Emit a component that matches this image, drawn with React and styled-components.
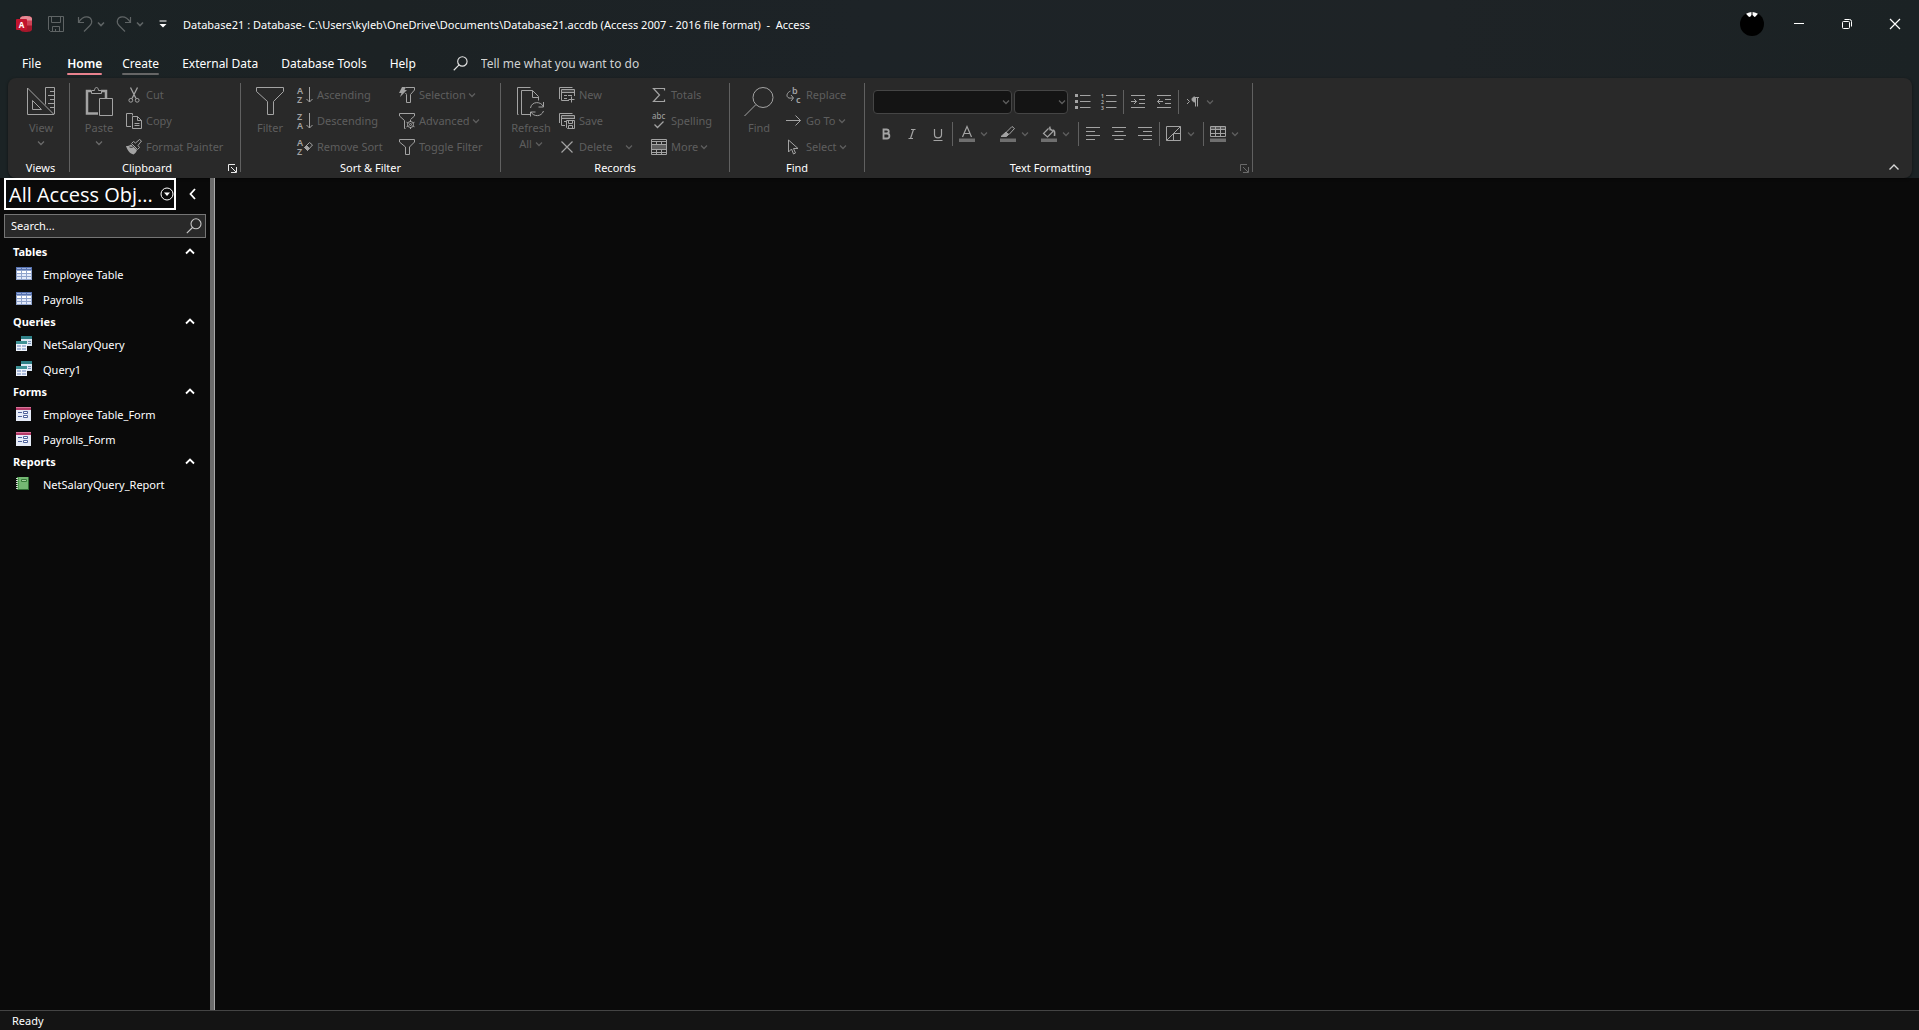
import React from 'react';
import styled, { createGlobalStyle } from 'styled-components';

const GlobalStyle = createGlobalStyle`
  *, *::before, *::after { box-sizing: border-box; }
  html, body, #root { height: 100%; }
  body {
    margin: 0;
    background: #0a0a0a;
    color: #fff;
    font-family: 'Noto Sans', 'Open Sans', sans-serif;
    font-size: 11px;
    overflow: hidden;
  }
  button, input, select { font: inherit; color: inherit; }
  button { background: none; border: 0; padding: 0; cursor: default; }
  ul { list-style: none; margin: 0; padding: 0; }
  svg { display: block; flex: none; overflow: visible; }
`;

const Window = styled.div`
  display: flex;
  flex-direction: column;
  height: 100vh;
`;

const Top = styled.header`
  background: linear-gradient(90deg, #1b2325 0%, #1c2224 20%, #1d2327 45%, #1e2326 75%, #1b2224 100%);
`;

const TitleBar = styled.div`
  display: flex;
  align-items: center;
  height: 48px;
  padding-left: 16px;
`;

const QuickAccess = styled.div`
  display: flex;
  align-items: center;
  color: #5f6465;
`;

const QuickButton = styled.button`
  display: flex;
  align-items: center;
  justify-content: center;
  width: ${props => props.$width || 16}px;
  height: 24px;
  margin-left: ${props => props.$gap || 0}px;
  color: ${props => (props.$bright ? '#fff' : 'inherit')};
`;

const Title = styled.h1`
  flex: 1;
  margin: 0 0 0 16px;
  padding-top: 1px;
  font-size: 11px;
  font-weight: 400;
  line-height: 16px;
  white-space: pre;
`;

const Avatar = styled.button`
  width: 24px;
  height: 24px;
  margin-right: 11px;
`;

const WindowButton = styled.button`
  display: flex;
  align-items: center;
  justify-content: center;
  width: 48px;
  height: 32px;
`;

const TabRow = styled.nav`
  display: flex;
  align-items: center;
  height: 30px;
  padding-left: 22px;
  font-size: 12px;
`;

const Tab = styled.button`
  position: relative;
  height: 30px;
  margin-right: ${props => props.$gap || 23}px;
  font-weight: ${props => (props.$active ? 600 : 400)};
  white-space: nowrap;

  &::after {
    content: '';
    position: absolute;
    left: 0;
    right: 0;
    bottom: 3px;
    height: 2px;
    border-radius: 1px;
    background: ${props => props.$line || 'transparent'};
  }
`;

const TellMe = styled.label`
  display: flex;
  align-items: center;
  gap: 13px;
  margin-left: 14px;
  color: #e4e4e4;

  input {
    width: 220px;
    padding: 0;
    border: 0;
    outline: 0;
    background: none;
  }
  input::placeholder { color: #d0d2d3; opacity: 1; }
`;

const Ribbon = styled.section`
  display: flex;
  height: 100px;
  margin: 0 7px 0 8px;
  padding: 4px 0 0 4px;
  border-radius: 8px;
  background: #292929;
  color: #5e5e5e;
  box-shadow: 0 1px 3px rgba(0, 0, 0, 0.5);
`;

const Group = styled.div`
  display: flex;
  flex-direction: column;
  width: ${props => props.$width}px;
`;

const GroupBody = styled.div`
  display: flex;
  gap: 6px;
  height: 78px;
  padding-left: 8px;
`;

const GroupFooter = styled.div`
  display: flex;
  align-items: center;
  height: 16px;
`;

const GroupLabel = styled.span`
  flex: 1;
  color: #fff;
  line-height: 16px;
  text-align: center;
`;

const Launcher = styled.button`
  width: 16px;
  padding-left: 4px;
  color: ${props => (props.$dim ? '#6a6a6a' : '#e8e8e8')};
`;

const GroupDivider = styled.div`
  width: 1px;
  height: 89px;
  margin-top: 1px;
  background: #606060;
`;

const LargeButton = styled.button`
  display: flex;
  flex-direction: column;
  align-items: center;
  width: ${props => props.$width || 42}px;
  padding-top: 5px;
  line-height: 16px;

  > svg { color: #a3a3a3; margin-bottom: 5px; }
  > svg:last-child { margin: 4px 0 0; color: #6a6a6a; }
`;

const InlineLabel = styled.span`
  display: flex;
  align-items: center;
  gap: 3px;
`;

const Column = styled.div`
  display: flex;
  flex-direction: column;
  width: ${props => props.$width}px;
`;

const SmallButton = styled.button`
  display: flex;
  align-items: center;
  height: 26px;
  padding-right: ${props => (props.$split ? 12 : 0)}px;
  line-height: 16px;
  white-space: nowrap;

  > svg:first-child { color: #a3a3a3; margin-right: 4px; }
  > span + svg { margin-left: ${props => (props.$split ? 'auto' : '2px')}; }
`;

const Collapse = styled.button`
  align-self: flex-end;
  margin: 0 13px 8px auto;
  color: #d8d8d8;
`;

const FormatRows = styled.div`
  display: flex;
  flex-direction: column;
  gap: 8px;
  height: 78px;
  padding: 8px 0 0 8px;
`;

const FormatRow = styled.div`
  display: flex;
  align-items: center;
  height: 24px;
`;

const ComboBox = styled.div`
  display: grid;
  align-items: center;
  width: ${props => props.$width}px;
  height: 24px;
  margin-right: 2px;

  select {
    grid-area: 1 / 1;
    width: 100%;
    height: 24px;
    appearance: none;
    border: 1px solid #454545;
    border-radius: 4px;
    background: #141414;
  }
  svg {
    grid-area: 1 / 1;
    justify-self: end;
    margin-right: 2px;
    pointer-events: none;
  }
`;

const ToolButton = styled.button`
  display: flex;
  align-items: center;
  justify-content: center;
  width: 26px;
  height: 24px;
  color: #a3a3a3;
`;

const ToolArrow = styled.button`
  display: flex;
  align-items: center;
  width: 15px;
  height: 24px;
`;

const ToolDivider = styled.div`
  width: 1px;
  height: 24px;
  margin: 0 1px;
  background: #606060;
`;

const Main = styled.main`
  display: flex;
  flex: 1;
  min-height: 0;
`;

const NavPane = styled.aside`
  width: 215px;
  padding-left: 4px;
  border-right: 1px solid #a8a8a8;
  box-shadow: inset -4px 0 0 #6b6b6b;
`;

const NavHeader = styled.div`
  display: flex;
  align-items: center;
  height: 32px;
`;

const NavTitle = styled.button`
  display: flex;
  align-items: center;
  justify-content: space-between;
  width: 172px;
  height: 32px;
  padding: 2px 0 0 3px;
  border: 2px solid #fff;
  font-family: 'Open Sans', 'Noto Sans', sans-serif;
  font-size: 20px;
  line-height: 26px;
  white-space: nowrap;

  svg { margin-bottom: 3px; }
`;

const ShutterButton = styled.button`
  margin-left: 13px;
`;

const SearchBox = styled.label`
  display: flex;
  align-items: center;
  width: 202px;
  height: 24px;
  margin: 4px 0;
  padding: 0 3px 0 6px;
  border: 1px solid #757575;
  background: #292929;
  color: #c8c8c8;

  input {
    flex: 1;
    min-width: 0;
    padding: 0 0 2px;
    border: 0;
    outline: 0;
    background: none;
  }
  input::placeholder { color: #fff; opacity: 1; }
`;

const SectionHeader = styled.button`
  display: flex;
  align-items: center;
  justify-content: space-between;
  width: 191px;
  height: 20px;
  padding: 0 0 2px 9px;
  font-weight: 700;
`;

const NavItem = styled.button`
  display: flex;
  align-items: center;
  gap: 11px;
  width: 202px;
  height: 25px;
  padding-left: 12px;
  white-space: nowrap;

  svg { margin-bottom: 2px; }
`;

const StatusBar = styled.footer`
  height: 20px;
  padding-left: 12px;
  border-top: 1px solid #444;
  background: #141414;
  line-height: 20px;
`;

// Line icons share one stroke setup; `size` is both the box and the grid.
const Icon = ({ size = 16, width, height, sw = 1, children }) => (
  <svg
    width={width || size}
    height={height || size}
    viewBox={`0 0 ${width || size} ${height || size}`}
    fill="none"
    stroke="currentColor"
    strokeWidth={sw}
    aria-hidden="true"
  >
    {children}
  </svg>
);

const Chevron = ({ sw = 1.3 }) => (
  <Icon width={8} height={6} sw={sw}><path d="M1 1.500 4 4.500 7 1.500" /></Icon>
);

const ChevronUp = () => (
  <Icon width={10} height={7} sw={1.8}><path d="M1 5.500 5 1.500 9 5.500" /></Icon>
);

const glyph = { fill: 'currentColor', stroke: 'none', fontFamily: "'Noto Sans', sans-serif" };

const AccessLogo = () => (
  <svg width="16" height="16" viewBox="0 0 16 16" aria-hidden="true">
    <path d="M4 2.500C4 .8 7 0 10 0s6 .8 6 2.500v11c0 1.700-3 2.500-6 2.500s-6-.8-6-2.500z" fill="#a5172b" />
    <path d="M4 2.500C4 .8 7 0 10 0s6 .8 6 2.500V5H4z" fill="#e58a94" />
    <path d="M11 4.500h5v5h-5z" fill="#cf4255" />
    <rect x="0" y="3" width="11" height="11" rx="1" fill="#c2142e" />
    <text x="5.500" y="11.500" fontSize="8" fontWeight="700" fill="#fff" textAnchor="middle" fontFamily="'Noto Sans', sans-serif">A</text>
  </svg>
);

const SaveIcon = () => (
  <Icon>
    <path d="M.5.5h15v15h-13l-2-2zM3.500.5v6h9v-6M4.500 15.500v-5h7v5M7.500 13v2.500" />
  </Icon>
);

const UndoIcon = () => (
  <Icon sw={1.2}><path d="M1.500 1v5.500H7M1.500 6.500C4 2.500 7 .6 10 .8c5 .4 6 5.700 3 8.700L7 15.500" /></Icon>
);

const RedoIcon = () => (
  <Icon sw={1.2}><path d="M14.500 1v5.500H9M14.500 6.500C12 2.500 9 .6 6 .8c-5 .4-6 5.700-3 8.700l6 6" /></Icon>
);

const CustomizeIcon = () => (
  <Icon width={8} height={8}><path d="M.5 1h7" /><path d="M.5 4h7L4 7.500z" fill="currentColor" stroke="none" /></Icon>
);

const SearchIcon = ({ size = 16, sw = 1.2 }) => (
  <svg width={size} height={size} viewBox="0 0 16 16" fill="none" stroke="currentColor" strokeWidth={sw} aria-hidden="true">
    <circle cx="10" cy="5.800" r="5" />
    <path d="M6.500 9.500.8 15.200" />
  </svg>
);

const ViewIcon = () => (
  <Icon size={28}>
    <path d="M.5 1v26.500h26.500zM5.500 13.500v9h9zM18.500 17.500V.5h9v26.500M23 4.500h4.500M21 8.500h6.500M23 12.500h4.500M21 16.500h6.500M23 20.500h4.500" />
  </Icon>
);

const PasteIcon = () => (
  <Icon size={28}>
    <path d="M6 4H2v22.500h11M16 4h5v7" strokeWidth="2.500" />
    <path d="M6.500 6.500v-3h3c0-4 4-4 4 0h3v3z" fill="#292929" />
    <path d="M14.500 11.500h13v17h-13z" fill="#292929" />
  </Icon>
);

const CutIcon = () => (
  <Icon>
    <path d="M4.500.5 10 11.500M11.500.5 6 11.500" strokeWidth="1.300" />
    <circle cx="4.800" cy="13.300" r="1.900" /><circle cx="11.200" cy="13.300" r="1.900" />
  </Icon>
);

const CopyIcon = () => (
  <Icon>
    <path d="M5 13.500H.5V.5h6v2M6.500 3.500h5l4 4v8h-9zM11.500 3.500v4h4M8.500 10.500h5M8.500 12.500h5" />
  </Icon>
);

const PainterIcon = () => (
  <Icon>
    <path d="m15.500 2-2-1.500L9.500 4 7.500 2.500 5.500 4.500l6 6 2-2-1.500-2z" />
    <path d="M5 5.500c-1.500 1-3 1.500-5 1.500 1.500 5 4 7.500 7.500 8.500 2-1 3-3 3.500-4.500z" fill="currentColor" stroke="none" />
    <path d="M3.500 8c2 .5 3 .5 4-.5" stroke="#292929" />
  </Icon>
);

const FunnelIcon = () => (
  <Icon size={28}><path d="M.5.500h27v4l-10 10v13h-6v-13l-11-10z" /></Icon>
);

const SortIcon = ({ top, bottom }) => (
  <Icon>
    <text x="0" y="7" fontSize="9" fontWeight="600" {...glyph}>{top}</text>
    <text x="0" y="16" fontSize="9" fontWeight="600" {...glyph}>{bottom}</text>
    <path d="M12.500 0v15M9.500 12l3 3 3-3" />
  </Icon>
);

const RemoveSortIcon = () => (
  <Icon>
    <text x="0" y="7" fontSize="9" fontWeight="600" {...glyph}>A</text>
    <text x="0" y="16" fontSize="9" fontWeight="600" {...glyph}>Z</text>
    <path d="m7.500 8.500 5-5 3 2.500-5 5.500z" />
    <path d="m7.500 8.500 2-2 3 3-2 2z" fill="currentColor" />
  </Icon>
);

const SelectionIcon = () => (
  <Icon>
    <path d="M7 .5h8.500V3l-4 4.500v8h-4v-8L6.500 6" />
    <path d="M3 0h4L5.500 3H8L1 10l1.500-4H0z" fill="currentColor" stroke="none" />
  </Icon>
);

const AdvancedIcon = () => (
  <Icon>
    <path d="M6.500 15.500h-1v-8l-5-4.500V.5h15V3l-4 3.500" />
    <circle cx="11.500" cy="11.500" r="3" />
    <circle cx="11.500" cy="11.500" r="1" />
    <path d="M11.500 7v2M11.500 14v2M7.500 9.200l1.700 1M13.800 12.800l1.700 1M15.500 9.200l-1.700 1M9.200 12.800l-1.700 1" />
  </Icon>
);

const ToggleFilterIcon = () => (
  <Icon><path d="M.5.5h15V3l-5 5v7.500h-4V8l-6-5z" /></Icon>
);

const RefreshIcon = () => (
  <Icon size={28}>
    <path d="M13 27.500H4.500V3.500h11l6 6v4M15.500 3.500v7h6" />
    <path d="M1.500 27.500H.5V.5h13" />
    <path d="M13.500 21c1-7 11-7 13-1M26.500 24c-2 6-10 6-12.500 1M26.500 15v5h-5M13.500 29.500V25h5" />
  </Icon>
);

const NewIcon = () => (
  <Icon>
    <path d="M.5 12V.5h13M10 13.500H2.500v-11h13V9" />
    <path d="M2.500 4h13" strokeOpacity="0.5" />
    <path d="M2.500 5.500h13M5 8.500h3M9 8.500h4M5 11.500h3M12.500 9.500v6M9.500 12.500h6" />
  </Icon>
);

const SaveRecordIcon = () => (
  <Icon>
    <path d="M.5 10V.5h13M6 12.500H2.500v-10h13V6M2.500 5.500h13M5 8.500h2" />
    <path d="M2.500 4h13" strokeOpacity="0.5" />
    <path d="M7.500 7.500h8v8h-7l-1-1zM9.500 7.500v3h4v-3M9.500 15.500v-3h4v3" />
  </Icon>
);

const DeleteIcon = () => (
  <Icon sw={1.2}><path d="m2.500 2.500 11 11M13.500 2.500l-11 11" /></Icon>
);

const SigmaIcon = () => (
  <Icon sw={1.2}><path d="M13.500 3.500v-2h-11l6 6.500-6 6.500h11v-2" /></Icon>
);

const SpellingIcon = () => (
  <Icon>
    <text x="1" y="6" fontSize="8" {...glyph}>abc</text>
    <path d="m3.500 11.500 3 3 6-6" strokeWidth="1.300" />
  </Icon>
);

const MoreIcon = () => (
  <Icon>
    <path d="M1 5h14v5H1z" fill="currentColor" fillOpacity="0.45" stroke="none" />
    <path d="M.5.5h15v15H.5zM.5 2.500h15M.5 5.500h15M.5 10.500h15M5.500 2.500v3M10.500 2.500v3M5.500 10.500v5M10.500 10.500v5M.5 13.500h15" />
  </Icon>
);

const FindIcon = () => (
  <Icon width={30} height={28}><circle cx="19" cy="10.500" r="10" /><path d="M12 17.500.5 29" /></Icon>
);

const ReplaceIcon = () => (
  <Icon>
    <text x="6" y="7" fontSize="9" fontWeight="600" {...glyph}>b</text>
    <text x="10" y="16" fontSize="9" fontWeight="600" {...glyph}>c</text>
    <path d="M4.500 4C1 5.500 0 9 2 10.500c1 1 3 .5 5 .5M5 8l2.500 3L5 14" />
  </Icon>
);

const GoToIcon = () => (
  <Icon><path d="M0 7.500h14.500M9.500 2.500l5 5-5 5" /></Icon>
);

const SelectIcon = () => (
  <Icon><path d="M2.500 1v12l3-3 2 5 2-1-2-4.500h4.500z" /></Icon>
);

const BulletsIcon = () => (
  <Icon>
    <path d="M0 0h3v3H0zM0 6h3v3H0zM0 12h3v3H0z" fill="currentColor" stroke="none" />
    <path d="M5 1.500h10.500M5 7.500h10.500M5 13.500h10.500" />
  </Icon>
);

const NumbersIcon = () => (
  <Icon>
    <text x="0" y="4" fontSize="5" fontWeight="700" {...glyph}>1</text>
    <text x="0" y="10" fontSize="5" fontWeight="700" {...glyph}>2</text>
    <text x="0" y="16" fontSize="5" fontWeight="700" {...glyph}>3</text>
    <path d="M5 1.500h10.500M5 7.500h10.500M5 13.500h10.500" />
  </Icon>
);

const IndentIcon = ({ out }) => (
  <Icon>
    <path d="M1 1.500h14M9 5.500h6M9 9.500h6M1 13.500h14" />
    <path d={out ? 'M7 7.500H1.500M4 5 1.500 7.500 4 10' : 'M1 7.500h5.500M4 5l2.500 2.500L4 10'} />
  </Icon>
);

const PilcrowIcon = () => (
  <Icon>
    <path d="m2 5 2.500 2.500L2 10" />
    <path d="M9 3.500h5M10.500 3.500v9M12.500 3.500v9" />
    <path d="M10 3c-4-.2-4 5 0 5z" fill="currentColor" />
  </Icon>
);

const FontColorIcon = () => (
  <Icon>
    <path d="M3.500 11 8 .5 12.500 11M5 7.500h6" strokeWidth="1.200" />
    <path d="M0 12.500h16v3.500H0z" fill="#6f6f6f" stroke="none" />
  </Icon>
);

const HighlightIcon = () => (
  <Icon>
    <path d="m6 6.500 6-6 2.500 2-5.500 6z" />
    <path d="M1 10.500 6 6l2.500 2.500-2 2z" fill="currentColor" />
    <path d="M0 12.500h16v3.500H0z" fill="#6f6f6f" stroke="none" />
  </Icon>
);

const FillIcon = () => (
  <Icon>
    <path d="M9 .5v4M7.500 2.500l-5 5 4 3.500 5.500-5.500-4-4" strokeWidth="1.200" />
    <path d="M11.500 4c2 0 2.500 2 2 6" strokeWidth="1.600" />
    <path d="M0 12.500h16v3.500H0z" fill="#6f6f6f" stroke="none" />
  </Icon>
);

const alignPaths = {
  left: 'M1 1.500h14M1 5.500h9M1 9.500h14M1 13.500h9',
  center: 'M1 1.500h14M3.500 5.500h9M1 9.500h14M3.500 13.500h9',
  right: 'M1 1.500h14M6 5.500h9M1 9.500h14M6 13.500h9',
};

const AlignIcon = ({ side }) => <Icon><path d={alignPaths[side]} /></Icon>;

const AlternateIcon = () => (
  <Icon><path d="M.5.500h14v14H.5zM.5 14.500l14-14M7.500 14.500v-7h7" /></Icon>
);

const GridIcon = () => (
  <Icon>
    <path d="M1 1h14v3H1z" fill="currentColor" fillOpacity="0.4" stroke="none" />
    <path d="M.5.500h15v10H.5zM.5 3.500h15M.5 7.500h15M5.500.500v10M10.500.500v10" />
    <path d="M0 12.500h16v3.500H0z" fill="#6f6f6f" stroke="none" />
  </Icon>
);

const LetterIcon = ({ kind }) => (
  <Icon>
    {kind === 'B' && <path d="M5.500 3.500h3c3 0 3 4 0 4h-3h3.500c3.200 0 3.200 5 0 5H5.500z" strokeWidth="1.800" />}
    {kind === 'I' && <path d="M7 3.500h4.500M4.500 12.500H9M9.500 3.500l-3 9" strokeWidth="1.200" />}
    {kind === 'U' && <path d="M4.500 3v5.500c0 4.500 7 4.500 7 0V3M3.500 14.500h9" strokeWidth="1.200" />}
  </Icon>
);

const LauncherIcon = () => (
  <Icon width={9} height={9}><path d="M.5 7V.5H7M3 3l5 5M8.500 3v5.500H3" /></Icon>
);

const TableIcon = () => (
  <svg width="16" height="14" viewBox="0 0 16 14" aria-hidden="true">
    <path d="M0 0h16v13H0z" fill="#8fa3cc" />
    <path d="M0 0h16v3H0z" fill="#5672b0" />
    <path d="M1 4h4v2H1zM6 4h4v2H6zM11 4h4v2h-4z" fill="#fff" />
    <path d="M1 7h4v2H1zM6 7h4v2H6zM11 7h4v2h-4zM1 10h4v2H1zM6 10h4v2H6zM11 10h4v2h-4z" fill="#e3eafa" />
    <path d="M1 1h4v1H1zM6 1h4v1H6zM11 1h4v1h-4z" fill="#9db0dc" />
  </svg>
);

const QueryIcon = () => (
  <svg width="16" height="16" viewBox="0 0 16 16" aria-hidden="true">
    <path d="M5 0h11v10H5z" fill="#dce8f4" />
    <path d="M5 0h11v3H5z" fill="#2f8087" />
    <path d="M12 5h3v1h-3zM12 7h3v1h-3z" fill="#7890b8" />
    <path d="M0 5h11v10H0z" fill="#f0f5fc" />
    <path d="M0 5h11v3H0z" fill="#3f9296" />
    <path d="M1 9h4v2H1zM6 9h4v2H6zM1 12h4v2H1zM6 12h4v2H6z" fill="#aabbdc" />
  </svg>
);

const FormIcon = () => (
  <svg width="16" height="14" viewBox="0 0 16 14" aria-hidden="true">
    <path d="M0 0h15v14H0z" fill="#e6ecf8" />
    <path d="M0 0h15v3H0z" fill="#b53a68" />
    <path d="M0 0h15v1H0z" fill="#d9759a" />
    <path d="M2 5h4v1H2zM2 9h4v1H2z" fill="#4f639c" />
    <path d="M7.500 4.500h4v2h-4zM7.500 8.500h4v2h-4z" fill="#fff" stroke="#4f639c" />
  </svg>
);

const ReportIcon = () => (
  <svg width="16" height="14" viewBox="0 0 16 14" aria-hidden="true">
    <path d="M1 0h12v13H1z" fill="#4f9a50" />
    <path d="M3 0h10v12H3z" fill="#74b873" />
    <path d="M5.500 2.500h5v2h-5z" fill="#a5d4a0" stroke="#357a38" />
    <path d="M0 1h2v1H0zM0 3h2v1H0zM0 5h2v1H0zM0 7h2v1H0zM0 9h2v1H0zM0 11h2v1H0z" fill="#cfd8cf" />
    <path d="M12 0h1v13h-1zM1 12h12v1H1z" fill="#2f6f34" />
  </svg>
);

const sections = [
  { name: 'Tables', icon: TableIcon, items: ['Employee Table', 'Payrolls'] },
  { name: 'Queries', icon: QueryIcon, items: ['NetSalaryQuery', 'Query1'] },
  { name: 'Forms', icon: FormIcon, items: ['Employee Table_Form', 'Payrolls_Form'] },
  { name: 'Reports', icon: ReportIcon, items: ['NetSalaryQuery_Report'] },
];

const Command = ({ icon, label, arrow, split }) => (
  <SmallButton $split={split}>
    {icon}
    <span>{label}</span>
    {(arrow || split) && <Chevron />}
  </SmallButton>
);

const RibbonGroup = ({ width, label, launcher, dim, children }) => (
  <>
    <Group $width={width}>
      {children}
      <GroupFooter>
        <GroupLabel>{label}</GroupLabel>
        {launcher && (
          <Launcher $dim={dim} aria-label={`${label} settings`}><LauncherIcon /></Launcher>
        )}
      </GroupFooter>
    </Group>
    <GroupDivider />
  </>
);

const Tool = ({ label, arrow, children }) => (
  <>
    <ToolButton aria-label={label}>{children}</ToolButton>
    {arrow && <ToolArrow aria-label={`${label} options`}><Chevron /></ToolArrow>}
  </>
);

const TextFormatting = () => (
  <FormatRows>
    <FormatRow>
      <ComboBox $width={139}>
        <select aria-label="Font" defaultValue=""><option value="" /></select>
        <Chevron />
      </ComboBox>
      <ComboBox $width={54}>
        <select aria-label="Font size" defaultValue=""><option value="" /></select>
        <Chevron />
      </ComboBox>
      <Tool label="Bullets"><BulletsIcon /></Tool>
      <Tool label="Numbering"><NumbersIcon /></Tool>
      <ToolDivider />
      <Tool label="Increase indent"><IndentIcon /></Tool>
      <Tool label="Decrease indent"><IndentIcon out /></Tool>
      <ToolDivider />
      <Tool label="Text direction" arrow><PilcrowIcon /></Tool>
    </FormatRow>
    <FormatRow>
      <Tool label="Bold"><LetterIcon kind="B" /></Tool>
      <Tool label="Italic"><LetterIcon kind="I" /></Tool>
      <Tool label="Underline"><LetterIcon kind="U" /></Tool>
      <ToolDivider />
      <Tool label="Font color" arrow><FontColorIcon /></Tool>
      <Tool label="Highlight" arrow><HighlightIcon /></Tool>
      <Tool label="Background color" arrow><FillIcon /></Tool>
      <ToolDivider />
      <Tool label="Align left"><AlignIcon side="left" /></Tool>
      <Tool label="Center"><AlignIcon side="center" /></Tool>
      <Tool label="Align right"><AlignIcon side="right" /></Tool>
      <ToolDivider />
      <Tool label="Alternate row color" arrow><AlternateIcon /></Tool>
      <ToolDivider />
      <Tool label="Gridlines" arrow><GridIcon /></Tool>
    </FormatRow>
  </FormatRows>
);

const HomeRibbon = () => (
  <Ribbon>
    <RibbonGroup width={57} label="Views">
      <GroupBody>
        <LargeButton><ViewIcon />View<Chevron /></LargeButton>
      </GroupBody>
    </RibbonGroup>

    <RibbonGroup width={170} label="Clipboard" launcher>
      <GroupBody>
        <LargeButton><PasteIcon />Paste<Chevron /></LargeButton>
        <Column>
          <Command icon={<CutIcon />} label="Cut" />
          <Command icon={<CopyIcon />} label="Copy" />
          <Command icon={<PainterIcon />} label="Format Painter" />
        </Column>
      </GroupBody>
    </RibbonGroup>

    <RibbonGroup width={259} label="Sort &amp; Filter">
      <GroupBody>
        <LargeButton><FunnelIcon /><span>Filter</span></LargeButton>
        <Column $width={96}>
          <Command icon={<SortIcon top="A" bottom="Z" />} label="Ascending" />
          <Command icon={<SortIcon top="Z" bottom="A" />} label="Descending" />
          <Command icon={<RemoveSortIcon />} label="Remove Sort" />
        </Column>
        <Column>
          <Command icon={<SelectionIcon />} label="Selection" arrow />
          <Command icon={<AdvancedIcon />} label="Advanced" arrow />
          <Command icon={<ToggleFilterIcon />} label="Toggle Filter" />
        </Column>
      </GroupBody>
    </RibbonGroup>

    <RibbonGroup width={228} label="Records">
      <GroupBody>
        <LargeButton $width={44}>
          <RefreshIcon />
          <span>Refresh</span>
          <InlineLabel>All <Chevron /></InlineLabel>
        </LargeButton>
        <Column $width={86}>
          <Command icon={<NewIcon />} label="New" />
          <Command icon={<SaveRecordIcon />} label="Save" />
          <Command icon={<DeleteIcon />} label="Delete" split />
        </Column>
        <Column>
          <Command icon={<SigmaIcon />} label="Totals" />
          <Command icon={<SpellingIcon />} label="Spelling" />
          <Command icon={<MoreIcon />} label="More" arrow />
        </Column>
      </GroupBody>
    </RibbonGroup>

    <RibbonGroup width={134} label="Find">
      <GroupBody>
        <LargeButton><FindIcon /><span>Find</span></LargeButton>
        <Column>
          <Command icon={<ReplaceIcon />} label="Replace" />
          <Command icon={<GoToIcon />} label="Go To" arrow />
          <Command icon={<SelectIcon />} label="Select" arrow />
        </Column>
      </GroupBody>
    </RibbonGroup>

    <RibbonGroup width={387} label="Text Formatting" launcher dim>
      <TextFormatting />
    </RibbonGroup>

    <Collapse aria-label="Collapse the ribbon">
      <Icon width={10} height={6} sw={1.4}><path d="M.5 5.500 5 1l4.500 4.500" /></Icon>
    </Collapse>
  </Ribbon>
);

const Navigation = () => (
  <NavPane>
    <NavHeader>
      <NavTitle>
        All Access Obj...
        <Icon size={14}>
          <circle cx="7" cy="7" r="6" />
          <path d="M4 5.500h6L7 9z" fill="currentColor" stroke="none" />
        </Icon>
      </NavTitle>
      <ShutterButton aria-label="Close navigation pane">
        <Icon width={7} height={12} sw={1.8}><path d="M6 1 1.500 6 6 11" /></Icon>
      </ShutterButton>
    </NavHeader>
    <SearchBox>
      <input type="text" aria-label="Search objects" placeholder="Search..." />
      <SearchIcon sw={1.1} />
    </SearchBox>
    {sections.map(({ name, icon: ItemIcon, items }) => (
      <section key={name}>
        <SectionHeader>{name}<ChevronUp /></SectionHeader>
        <ul>
          {items.map(item => (
            <li key={item}>
              <NavItem><ItemIcon />{item}</NavItem>
            </li>
          ))}
        </ul>
      </section>
    ))}
  </NavPane>
);

const App = () => (
  <Window>
    <GlobalStyle />
    <Top>
      <TitleBar>
        <AccessLogo />
        <QuickAccess>
          <QuickButton $gap={16} aria-label="Save"><SaveIcon /></QuickButton>
          <QuickButton $gap={13} aria-label="Undo"><UndoIcon /></QuickButton>
          <QuickButton $gap={4} $width={8} aria-label="Undo history"><Chevron sw={1.6} /></QuickButton>
          <QuickButton $gap={11} aria-label="Redo"><RedoIcon /></QuickButton>
          <QuickButton $gap={4} $width={8} aria-label="Redo history"><Chevron sw={1.6} /></QuickButton>
          <QuickButton $gap={15} $width={8} $bright aria-label="Customize toolbar"><CustomizeIcon /></QuickButton>
        </QuickAccess>
        <Title>{'Database21 : Database- C:\\Users\\kyleb\\OneDrive\\Documents\\Database21.accdb (Access 2007 - 2016 file format)  -  Access'}</Title>
        <Avatar aria-label="Account">
          <svg width="24" height="24" viewBox="0 0 24 24">
            <circle cx="12" cy="12" r="12" fill="#000" />
            <path d="M6 1.800 9 .5l2.500-.5v3L10 5 8.500 4.500zM18 1.800 15 .5 12.500 0v3L14.500 5l1-.5z" fill="#fff" />
          </svg>
        </Avatar>
        <WindowButton aria-label="Minimize"><Icon size={10}><path d="M0 4.500h10" /></Icon></WindowButton>
        <WindowButton aria-label="Restore">
          <Icon size={10}>
            <rect x=".5" y="2.500" width="7" height="7" rx="1" />
            <path d="M2.500.5h5a2 2 0 0 1 2 2v5" />
          </Icon>
        </WindowButton>
        <WindowButton aria-label="Close"><Icon size={10} sw={1.2}><path d="m0 0 10 10M10 0 0 10" /></Icon></WindowButton>
      </TitleBar>
      <TabRow>
        <Tab $gap={26}>File</Tab>
        <Tab $active $line="#e8828e" $gap={20}>Home</Tab>
        <Tab $line="#666">Create</Tab>
        <Tab>External Data</Tab>
        <Tab>Database Tools</Tab>
        <Tab>Help</Tab>
        <TellMe>
          <SearchIcon size={15} />
          <input type="text" aria-label="Tell me" placeholder="Tell me what you want to do" />
        </TellMe>
      </TabRow>
      <HomeRibbon />
    </Top>
    <Main><Navigation /></Main>
    <StatusBar>Ready</StatusBar>
  </Window>
);

export default App;
